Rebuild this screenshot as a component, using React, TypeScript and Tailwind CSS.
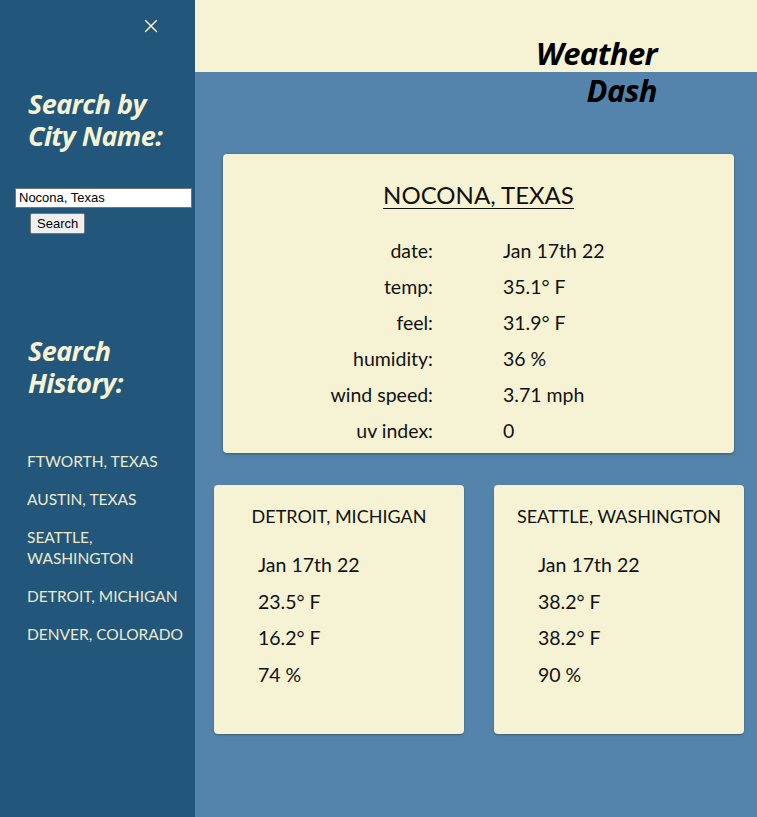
import { X } from "lucide-react";

const heading = { fontFamily: '"Open Sans", "DejaVu Sans", sans-serif' };
const body = { fontFamily: 'Lato, "Noto Sans", sans-serif' };

const history = ["FTWORTH, TEXAS", "AUSTIN, TEXAS", "SEATTLE, WASHINGTON", "DETROIT, MICHIGAN", "DENVER, COLORADO"];

const current = [
  ["date:", "Jan 17th 22"],
  ["temp:", "35.1° F"],
  ["feel:", "31.9° F"],
  ["humidity:", "36 %"],
  ["wind speed:", "3.71 mph"],
  ["uv index:", "0"],
];

const saved = [
  { city: "DETROIT, MICHIGAN", rows: ["Jan 17th 22", "23.5° F", "16.2° F", "74 %"] },
  { city: "SEATTLE, WASHINGTON", rows: ["Jan 17th 22", "38.2° F", "38.2° F", "90 %"] },
];

function Sidebar() {
  return (
    <aside className="w-[195px] shrink-0 bg-[#22577b] text-[#f6f3d4] min-h-[817px]">
      <div className="flex justify-end pr-[33px] pt-[15px]">
        <X size={22} strokeWidth={1.6} className="text-[#f6f3d4]" />
      </div>
      <h2 style={heading} className="mt-[51px] pl-[28px] text-[27px] leading-[32px] font-bold italic tracking-[-0.6px]">
        Search by
        <br />
        City Name:
      </h2>
      <form className="mt-[32px] pl-[15px]" onSubmit={(e) => e.preventDefault()}>
        <input
          defaultValue="Nocona, Texas"
          className="w-[177px] h-[20px] bg-white text-black text-[13px] px-[3px] border border-[#767676] outline-none"
          style={{ fontFamily: '"Liberation Sans", Arial, sans-serif' }}
        />
        <button
          type="submit"
          className="block ml-[15px] mt-[5px] h-[21px] px-[6px] bg-[#efefef] text-black text-[13px] border border-[#767676] rounded-[2px]"
          style={{ fontFamily: '"Liberation Sans", Arial, sans-serif' }}
        >
          Search
        </button>
      </form>
      <h2 style={heading} className="mt-[101px] pl-[28px] text-[27px] leading-[32px] font-bold italic tracking-[-0.6px]">
        Search
        <br />
        History:
      </h2>
      <ul style={body} className="mt-[52px] pl-[27px] pr-[8px] text-[15.5px] leading-[21px] text-[#ece9cc] flex flex-col gap-[17px]">
        {history.map((h) => (
          <li key={h}>{h}</li>
        ))}
      </ul>
    </aside>
  );
}

function CurrentCard() {
  return (
    <section style={body} className="ml-[28px] mr-[23px] mt-[82px] bg-[#f6f3d4] rounded-[4px] shadow-[0_1px_3px_rgba(0,0,0,0.35)] pt-[26px] pb-[4px] text-[#111]">
      <h3 className="text-center text-[24px] leading-[30px] underline underline-offset-[4px] decoration-1">NOCONA, TEXAS</h3>
      <div className="mt-[23px] grid grid-cols-[210px_1fr] gap-x-[70px]">
        {current.map(([k, v]) => (
          <div key={k} className="contents">
            <div className="text-right text-[19.5px] leading-[36px]">{k}</div>
            <div className="text-[19.5px] leading-[36px]">{v}</div>
          </div>
        ))}
      </div>
    </section>
  );
}

function SavedCard({ city, rows }: { city: string; rows: string[] }) {
  return (
    <section style={body} className="w-[250px] h-[249px] bg-[#f6f3d4] rounded-[4px] shadow-[0_1px_2px_rgba(0,0,0,0.3)] pt-[19px] text-[#111]">
      <h4 className="text-center text-[18px] leading-[24px]">{city}</h4>
      <ul className="mt-[19px] pl-[44px] flex flex-col">
        {rows.map((r, i) => (
          <li key={i} className="text-[19.5px] leading-[36.7px]">
            {r}
          </li>
        ))}
      </ul>
    </section>
  );
}

export default function App() {
  return (
    <div className="flex w-[757px] min-h-[817px] bg-[#5484ab]">
      <Sidebar />
      <main className="flex-1 flex flex-col">
        <header className="h-[72px] bg-[#f6f3d4] relative">
          <h1
            style={heading}
            className="absolute right-[100px] top-[35px] text-right text-[31px] leading-[37px] font-bold italic tracking-[-0.6px] text-black"
          >
            Weather
            <br />
            Dash
          </h1>
        </header>
        <CurrentCard />
        <div className="mt-[32px] flex justify-between pl-[19px] pr-[13px]">
          {saved.map((s) => (
            <SavedCard key={s.city} city={s.city} rows={s.rows} />
          ))}
        </div>
      </main>
    </div>
  );
}
